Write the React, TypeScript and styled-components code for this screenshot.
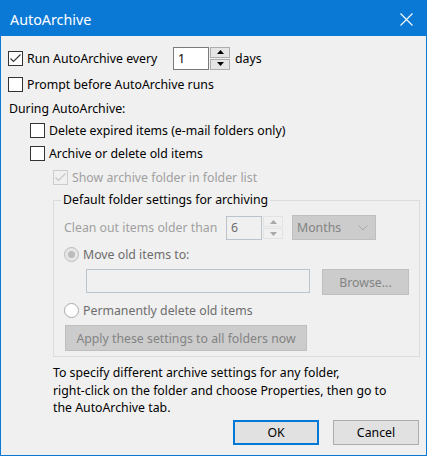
import React from "react";
import styled, { createGlobalStyle } from "styled-components";

const GlobalStyle = createGlobalStyle`
  html, body {
    margin: 0;
    padding: 0;
    background: #ffffff;
  }
  body {
    font-family: "Noto Sans", "Open Sans", sans-serif;
    font-size: 12.3px;
    color: #000000;
  }
`;

const Window = styled.div`
  width: 427px;
  height: 456px;
  box-sizing: border-box;
  border: 1px solid #0a79d6;
  border-top: none;
  background: #f0f0f0;
  display: flex;
  flex-direction: column;
`;

const TitleBar = styled.div`
  height: 36px;
  flex: none;
  box-sizing: border-box;
  margin: 0 -1px;
  padding: 3px 14px 0 10px;
  background: #0a79d6;
  color: #ffffff;
  font-size: 14.3px;
  display: flex;
  align-items: center;
  justify-content: space-between;
`;

const Body = styled.div`
  padding: 10px 0 0 7px;
  display: flex;
  flex-direction: column;
`;

const Row = styled.div<{ $h: number; $mt?: number; $indent?: number; $align?: string }>`
  display: flex;
  align-items: ${(p) => p.$align || "center"};
  height: ${(p) => p.$h}px;
  margin-top: ${(p) => p.$mt || 0}px;
  padding-left: ${(p) => p.$indent || 0}px;
  white-space: nowrap;
`;

const Box = styled.span<{ $disabled?: boolean }>`
  width: 15px;
  height: 15px;
  flex: none;
  box-sizing: border-box;
  border: 1px solid ${(p) => (p.$disabled ? "#cccccc" : "#333333")};
  background: ${(p) => (p.$disabled ? "#f0f0f0" : "#ffffff")};
  display: flex;
  align-items: center;
  justify-content: center;
`;

const Round = styled.span<{ $disabled?: boolean }>`
  width: 15px;
  height: 15px;
  flex: none;
  box-sizing: border-box;
  border-radius: 50%;
  border: 1px solid ${(p) => (p.$disabled ? "#bcbcbc" : "#a9a9a9")};
  background: ${(p) => (p.$disabled ? "#e6e6e6" : "#ffffff")};
  display: flex;
  align-items: center;
  justify-content: center;
`;

const Dot = styled.span`
  width: 7px;
  height: 7px;
  border-radius: 50%;
  background: #bcbcbc;
`;

const Text = styled.span<{ $w?: number; $tone?: "muted" | "faint"; $ml?: number }>`
  display: inline-block;
  margin-left: ${(p) => (p.$ml === undefined ? 4 : p.$ml)}px;
  ${(p) => (p.$w ? `width: ${p.$w}px; flex: none;` : "")}
  color: ${(p) =>
    p.$tone === "faint" ? "#a0a0a0" : p.$tone === "muted" ? "#6d6d6d" : "#000000"};
`;

const Field = styled.div<{ $w: number; $h: number; $disabled?: boolean; $ml?: number }>`
  width: ${(p) => p.$w}px;
  height: ${(p) => p.$h}px;
  margin-left: ${(p) => p.$ml || 0}px;
  flex: none;
  box-sizing: border-box;
  border: 1px solid ${(p) => (p.$disabled ? "#b9c4cf" : "#7a7a7a")};
  background: ${(p) => (p.$disabled ? "#f0f0f0" : "#ffffff")};
  color: ${(p) => (p.$disabled ? "#6d6d6d" : "#000000")};
  padding-left: 4px;
  display: flex;
  align-items: center;
`;

const Spinner = styled.div`
  width: 20px;
  height: 23px;
  margin-left: 1px;
  flex: none;
  display: flex;
  flex-direction: column;
  gap: 1px;
`;

const SpinHalf = styled.div<{ $disabled?: boolean }>`
  flex: 1;
  box-sizing: border-box;
  border: 1px solid ${(p) => (p.$disabled ? "#e3e3e3" : "#adadad")};
  background: ${(p) => (p.$disabled ? "#f0f0f0" : "#e5e5e5")};
  display: flex;
  align-items: center;
  justify-content: center;
`;

const Select = styled.div`
  width: 84px;
  height: 25px;
  margin-left: 9px;
  flex: none;
  box-sizing: border-box;
  border: 1px solid #bfbfbf;
  background: #cccccc;
  color: #838383;
  padding: 0 7px 0 4px;
  display: flex;
  align-items: center;
  justify-content: space-between;
`;

const Button = styled.div<{ $w: number; $h?: number; $ml?: number; $variant?: "default" | "disabled" }>`
  width: ${(p) => p.$w}px;
  height: ${(p) => p.$h || 25}px;
  margin-left: ${(p) => p.$ml || 0}px;
  flex: none;
  box-sizing: border-box;
  border: ${(p) =>
    p.$variant === "default"
      ? "2px solid #0078d7"
      : p.$variant === "disabled"
      ? "1px solid #bfbfbf"
      : "1px solid #adadad"};
  background: ${(p) => (p.$variant === "disabled" ? "#cccccc" : "#e1e1e1")};
  color: ${(p) => (p.$variant === "disabled" ? "#838383" : "#000000")};
  display: flex;
  align-items: center;
  justify-content: center;
`;

const Group = styled.fieldset`
  width: 367px;
  box-sizing: border-box;
  margin: 4px 0 0 45px;
  padding: 0 10px 5px 10px;
  border: 1px solid #dcdcdc;
  min-width: 0;
`;

const Legend = styled.legend`
  padding: 0 2px;
  margin-left: -3px;
  line-height: 16px;
`;

const Note = styled.p`
  margin: 7px 0 0 45px;
  line-height: 17.5px;
`;

const Footer = styled.div`
  margin-top: 3.5px;
  padding-right: 7px;
  display: flex;
  justify-content: flex-end;
  gap: 14px;
`;

const Check = ({ disabled, checked }: { disabled?: boolean; checked?: boolean }) => (
  <Box $disabled={disabled}>
    {checked && (
      <svg width="13" height="13" viewBox="0 0 13 13">
        <polyline
          points="1.5,6.5 4.5,9.5 11.5,2.5"
          fill="none"
          stroke={disabled ? "#c4c4c4" : "#333333"}
          strokeWidth="1.1"
        />
      </svg>
    )}
  </Box>
);

const Arrow = ({ up, color }: { up?: boolean; color: string }) => (
  <svg width="7" height="4" viewBox="0 0 7 4">
    <polygon points={up ? "0,4 3.5,0 7,4" : "0,0 3.5,4 7,0"} fill={color} />
  </svg>
);

const Spin = ({ disabled }: { disabled?: boolean }) => (
  <Spinner>
    <SpinHalf $disabled={disabled}>
      <Arrow up color={disabled ? "#a6a6a6" : "#000000"} />
    </SpinHalf>
    <SpinHalf $disabled={disabled}>
      <Arrow color={disabled ? "#a6a6a6" : "#000000"} />
    </SpinHalf>
  </Spinner>
);

export default function App() {
  return (
    <>
      <GlobalStyle />
      <Window>
        <TitleBar>
          <span>AutoArchive</span>
          <svg width="13" height="13" viewBox="0 0 13 13">
            <path d="M0.5 0.5 L12.5 12.5 M12.5 0.5 L0.5 12.5" stroke="#ffffff" strokeWidth="1.1" />
          </svg>
        </TitleBar>
        <Body>
          <Row $h={24}>
            <Check checked />
            <Text $w={146}>Run AutoArchive every</Text>
            <Field $w={36} $h={23}>1</Field>
            <Spin />
            <Text $ml={5}>days</Text>
          </Row>
          <Row $h={21} $mt={4}>
            <Check />
            <Text>Prompt before AutoArchive runs</Text>
          </Row>
          <Row $h={23} $mt={2} $indent={1}>
            <Text $ml={0}>During AutoArchive:</Text>
          </Row>
          <Row $h={20} $indent={22}>
            <Check />
            <Text>Delete expired items (e-mail folders only)</Text>
          </Row>
          <Row $h={21} $mt={3} $indent={22}>
            <Check />
            <Text>Archive or delete old items</Text>
          </Row>
          <Row $h={22} $mt={2} $indent={45}>
            <Check checked disabled />
            <Text $tone="faint">Show archive folder in folder list</Text>
          </Row>
          <Group>
            <Legend>Default folder settings for archiving</Legend>
            <Row $h={25} $mt={7}>
              <Text $ml={0} $w={162} $tone="faint">
                Clean out items older than
              </Text>
              <Field $w={36} $h={24} $disabled>
                6
              </Field>
              <Spin disabled />
              <Select>
                <span>Months</span>
                <svg width="10" height="6" viewBox="0 0 10 6">
                  <polyline points="0.5,0.5 5,5 9.5,0.5" fill="none" stroke="#a6a6a6" strokeWidth="1" />
                </svg>
              </Select>
            </Row>
            <Row $h={21} $mt={4}>
              <Round $disabled>
                <Dot />
              </Round>
              <Text $tone="muted">Move old items to:</Text>
            </Row>
            <Row $h={26} $mt={4} $align="flex-start">
              <Field $w={224} $h={24} $ml={22} $disabled />
              <Button $w={87} $h={26} $ml={12} $variant="disabled">
                Browse...
              </Button>
            </Row>
            <Row $h={22} $mt={4}>
              <Round />
              <Text $tone="muted">Permanently delete old items</Text>
            </Row>
            <Row $h={26} $mt={4}>
              <Button $w={242} $h={26} $ml={1} $variant="disabled">
                Apply these settings to all folders now
              </Button>
            </Row>
          </Group>
          <Note>
            To specify different archive settings for any folder,
            <br />
            right-click on the folder and choose Properties, then go to
            <br />
            the AutoArchive tab.
          </Note>
        </Body>
        <Footer>
          <Button $w={86} $variant="default">
            OK
          </Button>
          <Button $w={86}>Cancel</Button>
        </Footer>
      </Window>
    </>
  );
}
